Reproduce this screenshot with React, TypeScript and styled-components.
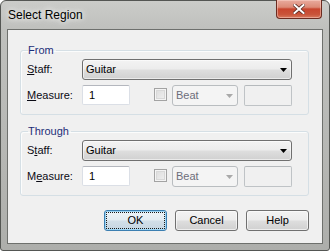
import React from 'react';
import styled, { createGlobalStyle } from 'styled-components';

const GlobalStyle = createGlobalStyle`
  html, body {
    margin: 0;
    padding: 0;
    background: #ffffff;
  }
  body {
    font-family: "Liberation Sans", Arial, sans-serif;
    font-size: 11px;
    color: #000;
  }
`;

const Window = styled.div`
  width: 330px;
  height: 251px;
  box-sizing: border-box;
  border: 1px solid #545653;
  border-radius: 6px 6px 3px 3px;
  background: linear-gradient(180deg, #cbccc9 0px, #bfc0bd 28px, #b6b7b4 60%, #adaeab 100%);
  padding: 0 6px 6px;
  display: flex;
  flex-direction: column;
`;

const TitleBar = styled.div`
  height: 28px;
  flex-shrink: 0;
  display: flex;
  align-items: flex-start;
`;

const Title = styled.div`
  margin: 7px 0 0 1px;
  font-size: 12px;
  line-height: 14px;
  color: #000;
  text-shadow: 0 0 5px #f4f4f2, 0 0 9px rgba(255, 255, 255, 0.9);
`;

const CloseButton = styled.div`
  margin: -1px 1px 0 auto;
  width: 46px;
  height: 19px;
  box-sizing: border-box;
  border: 1px solid #6b2b20;
  border-top: none;
  border-radius: 0 0 4px 4px;
  background: linear-gradient(180deg, #e9ab9e 0%, #dc8a77 40%, #c8452e 50%, #c9543a 80%, #d77a5f 100%);
  box-shadow: inset 0 0 0 1px rgba(255, 220, 210, 0.45);
  display: flex;
  align-items: center;
  justify-content: center;
`;

const Client = styled.div`
  flex: 1;
  border: 1px solid #6e706d;
  background: #f0f0f0;
  padding: 0 13px 0 12px;
  display: flex;
  flex-direction: column;
`;

const Group = styled.fieldset<{ $top: number }>`
  margin: ${p => p.$top}px 0 0;
  padding: 2px 16px 8px 6px;
  border: 1px solid #d5dfe5;
  border-radius: 3px;
  box-shadow: inset 1px 1px 0 #fbfcfc;
  min-width: 0;
`;

const Legend = styled.legend`
  padding: 0 2px 0 0;
  margin-left: 1px;
  line-height: 13px;
  color: #1c2e78;
`;

const Row = styled.div<{ $gap?: number }>`
  display: flex;
  align-items: flex-start;
  height: 21px;
  margin-top: ${p => p.$gap ?? 0}px;
`;

const Label = styled.span`
  width: 55px;
  line-height: 21px;
  color: #0a0a14;
`;

const Key = styled.span`
  text-decoration: underline;
`;

const Combo = styled.div<{ $width: number; $gap?: number; $disabled?: boolean }>`
  width: ${p => p.$width}px;
  height: 21px;
  margin-left: ${p => p.$gap ?? 0}px;
  box-sizing: border-box;
  border: 1px solid ${p => (p.$disabled ? '#b9bdc0' : '#707070')};
  border-radius: 3px;
  background: ${p =>
    p.$disabled
      ? '#f4f4f4'
      : 'linear-gradient(180deg, #f3f3f3 0%, #ececec 48%, #dedede 52%, #d0d0d0 100%)'};
  box-shadow: ${p => (p.$disabled ? 'none' : 'inset 0 0 0 1px rgba(255,255,255,0.55)')};
  color: ${p => (p.$disabled ? '#6d6d7a' : '#000')};
  display: flex;
  align-items: center;
  padding: 0 4px 0 3px;
  line-height: 19px;
`;

const ComboText = styled.span`
  flex: 1;
`;

const Edit = styled.div<{ $width: number; $gap: number; $disabled?: boolean }>`
  width: ${p => p.$width}px;
  height: ${p => (p.$disabled ? 21 : 20)}px;
  margin-left: ${p => p.$gap}px;
  box-sizing: border-box;
  border: 1px solid ${p => (p.$disabled ? '#bfc3c6' : '#dbdfe6')};
  border-top-color: ${p => (p.$disabled ? '#b5b9bc' : '#b4b7be')};
  border-radius: 2px;
  background: ${p => (p.$disabled ? '#f0f0f0' : '#ffffff')};
  padding-left: 6px;
  line-height: 18px;
`;

const Check = styled.div`
  width: 13px;
  height: 13px;
  margin: 3px 0 0 24px;
  box-sizing: border-box;
  border: 1px solid #a3a3a3;
  background: linear-gradient(135deg, #dadada, #f2f2f2);
  box-shadow: inset 0 0 0 1px #f4f4f4, inset 0 0 0 2px #d8d8d8;
`;

const ButtonRow = styled.div`
  margin-top: 14px;
  display: flex;
  justify-content: flex-end;
  gap: 8px;
`;

const Button = styled.div<{ $default?: boolean }>`
  width: 63px;
  height: 21px;
  box-sizing: border-box;
  border: 1px solid ${p => (p.$default ? '#3c7fb1' : '#707070')};
  border-radius: 3px;
  background: ${p =>
    p.$default
      ? 'linear-gradient(180deg, #eef4f8 0%, #e3ecf2 48%, #d2dfe8 52%, #c6d6e2 100%)'
      : 'linear-gradient(180deg, #f3f3f3 0%, #ececec 48%, #dedede 52%, #d0d0d0 100%)'};
  box-shadow: ${p =>
    p.$default ? 'inset 0 0 0 1px #9fd6f5' : 'inset 0 0 0 1px rgba(255,255,255,0.6)'};
  padding: 1px;
  display: flex;
`;

const Face = styled.span<{ $focus?: boolean }>`
  flex: 1;
  border: 1px dotted ${p => (p.$focus ? '#1a1a1a' : 'transparent')};
  display: flex;
  align-items: center;
  justify-content: center;
  line-height: 13px;
  color: #000;
`;

const Arrow = ({ color }: { color: string }) => (
  <svg width="7" height="4" viewBox="0 0 7 4">
    <polygon points="0,0 7,0 3.5,4" fill={color} />
  </svg>
);

const RangeGroup = ({
  title,
  staffKey,
  measureKey,
  top,
}: {
  title: string;
  staffKey: number;
  measureKey: number;
  top: number;
}) => {
  const underline = (word: string, i: number) => (
    <>
      {word.slice(0, i)}
      <Key>{word[i]}</Key>
      {word.slice(i + 1)}:
    </>
  );

  return (
    <Group $top={top}>
      <Legend>{title}</Legend>
      <Row>
        <Label>{underline('Staff', staffKey)}</Label>
        <Combo $width={210}>
          <ComboText>Guitar</ComboText>
          <Arrow color="#000" />
        </Combo>
      </Row>
      <Row $gap={5}>
        <Label>{underline('Measure', measureKey)}</Label>
        <Edit $width={48} $gap={0}>1</Edit>
        <Check />
        <Combo $width={66} $gap={5} $disabled>
          <ComboText>Beat</ComboText>
          <Arrow color="#a9a9a9" />
        </Combo>
        <Edit $width={48} $gap={6} $disabled />
      </Row>
    </Group>
  );
};

export default function App() {
  return (
    <>
      <GlobalStyle />
      <Window>
        <TitleBar>
          <Title>Select Region</Title>
          <CloseButton>
            <svg width="12" height="10" viewBox="0 0 12 10">
              <path
                d="M1.5 1 L10.5 9 M10.5 1 L1.5 9"
                stroke="#5a2a22"
                strokeWidth="3.6"
                strokeLinecap="square"
              />
              <path
                d="M1.5 1 L10.5 9 M10.5 1 L1.5 9"
                stroke="#ffffff"
                strokeWidth="2"
                strokeLinecap="square"
              />
            </svg>
          </CloseButton>
        </TitleBar>
        <Client>
          <RangeGroup title="From" staffKey={0} measureKey={0} top={14} />
          <RangeGroup title="Through" staffKey={1} measureKey={1} top={10} />
          <ButtonRow>
            <Button $default>
              <Face $focus>OK</Face>
            </Button>
            <Button>
              <Face>Cancel</Face>
            </Button>
            <Button>
              <Face>Help</Face>
            </Button>
          </ButtonRow>
        </Client>
      </Window>
    </>
  );
}
